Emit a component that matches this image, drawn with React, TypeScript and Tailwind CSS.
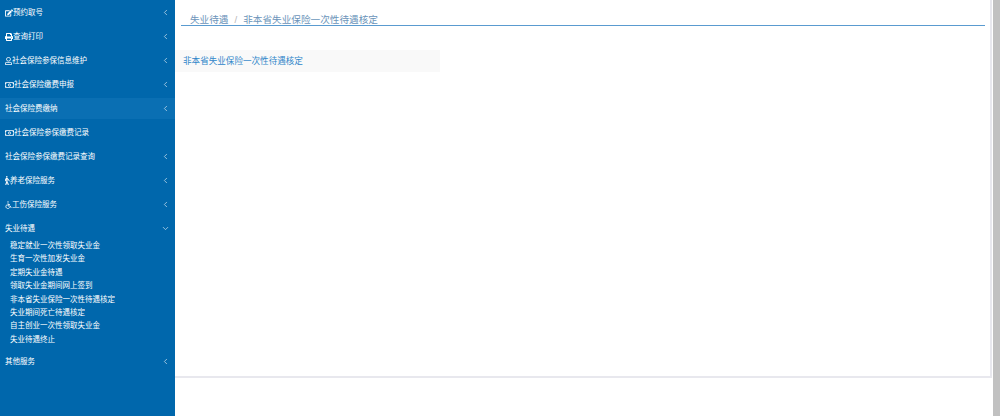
import { ChevronDown, ChevronLeft } from "lucide-react";
import { FaBlind, FaEdit, FaPrint, FaRegMoneyBillAlt, FaRegUser } from "react-icons/fa";
import type { ReactNode } from "react";

type TItem = {
  label: string;
  icon?: ReactNode;
  arrow?: boolean;
  active?: boolean;
};

function WheelchairIcon() {
  return (
    <svg viewBox="0 0 14 16" className="w-[7px] h-[8px] shrink-0" fill="none" stroke="currentColor" strokeWidth="1.6">
      <circle cx="6" cy="1.8" r="1.4" fill="currentColor" stroke="none" />
      <path d="M6 4.5V10H10.5L12.5 14" />
      <path d="M6 7H10" />
      <path d="M4 7.5A4 4 0 1 0 9.5 12.5" />
    </svg>
  );
}

const topItems: TItem[] = [
  { label: "预约取号", icon: <FaEdit className="w-[8px] h-[8px] shrink-0" />, arrow: true },
  { label: "查询打印", icon: <FaPrint className="w-[8px] h-[8px] shrink-0" />, arrow: true },
  { label: "社会保险参保信息维护", icon: <FaRegUser className="w-[7px] h-[8px] shrink-0" />, arrow: true },
  { label: "社会保险缴费申报", icon: <FaRegMoneyBillAlt className="w-[9px] h-[8px] shrink-0" />, arrow: true },
  { label: "社会保险费缴纳", arrow: true, active: true },
  { label: "社会保险参保缴费记录", icon: <FaRegMoneyBillAlt className="w-[9px] h-[8px] shrink-0" /> },
  { label: "社会保险参保缴费记录查询", arrow: true },
  { label: "养老保险服务", icon: <FaBlind className="w-[7px] h-[9px] -mr-[2px] shrink-0" />, arrow: true },
  { label: "工伤保险服务", icon: <WheelchairIcon />, arrow: true },
];

const subItems = [
  "稳定就业一次性领取失业金",
  "生育一次性加发失业金",
  "定期失业金待遇",
  "领取失业金期间网上签到",
  "非本省失业保险一次性待遇核定",
  "失业期间死亡待遇核定",
  "自主创业一次性领取失业金",
  "失业待遇终止",
];

function MenuRow({ label, icon, arrow, active }: TItem) {
  return (
    <div className="h-[24px] pt-[2px]">
      <div
        className={`h-[21px] flex items-center pl-[5px] pr-[5px] text-[7.5px] text-white ${
          active ? "bg-[#0a6fb3]" : ""
        }`}
      >
        {icon}
        <span className="flex-1">{label}</span>
        {arrow && <ChevronLeft className="w-[9px] h-[9px] text-[#c5dcec]" />}
      </div>
    </div>
  );
}

export default function App() {
  return (
    <div
      className="flex h-[416px] w-[1000px] overflow-hidden bg-white"
      style={{ fontFamily: '"Liberation Sans", "Noto Sans CJK SC", sans-serif' }}
    >
      <div className="w-[175px] shrink-0 bg-[#0067ac]">
        {topItems.map((item) => (
          <MenuRow key={item.label} {...item} />
        ))}
        <div className="h-[24px] pt-[2px]">
          <div className="h-[21px] flex items-center pl-[5px] pr-[5px] text-[7.5px] text-white">
            <span className="flex-1">失业待遇</span>
            <ChevronDown className="w-[9px] h-[9px] text-[#c5dcec]" />
          </div>
        </div>
        <div className="pl-[10px] -mt-[1px]">
          {subItems.map((sub) => (
            <div key={sub} className="h-[13.4px] leading-[13.4px] text-[7.5px] text-white">
              {sub}
            </div>
          ))}
        </div>
        <div className="mt-[3px]">
          <MenuRow label="其他服务" arrow />
        </div>
      </div>

      <div className="flex-1 min-w-0">
        <div className="h-[378px] border-r-2 border-b-2 border-[#e8e8ee] pt-[14px]">
          <div className="ml-[6px] mr-[5px] h-[11px] border-b border-[#5a9bd0] pl-[9px] text-[9.65px] leading-[11px] text-[#6b94ba] box-content">
            失业待遇<span className="mx-[6px] text-[#b5b5b5]">/</span>非本省失业保险一次性待遇核定
          </div>
          <div className="mt-[24px] h-[22px] w-[265px] bg-[#f9f9f9] pl-[8px] text-[8.57px] leading-[23px] text-[#2f86c9]">
            非本省失业保险一次性待遇核定
          </div>
        </div>
      </div>

      <div className="w-[8px] shrink-0 border-l border-white bg-[#c1c1c1]" />
    </div>
  );
}
